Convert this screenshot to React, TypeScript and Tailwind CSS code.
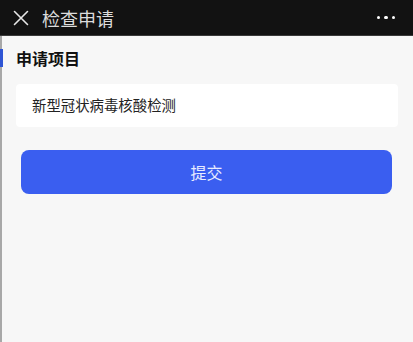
export default function App() {
  return (
    <div
      className="flex h-[342px] w-[413px] flex-col overflow-hidden bg-[#f7f7f7]"
      style={{ fontFamily: '"Noto Sans CJK SC", "Noto Sans", sans-serif' }}
    >
      {/* Top bar */}
      <header className="flex h-[35px] shrink-0 items-center bg-[#121212] pl-[13px] pr-[18px]">
        <svg width="16" height="16" viewBox="0 0 16 16" className="text-[#e6e6e6]">
          <path d="M1.5 1.5 L14.5 14.5 M14.5 1.5 L1.5 14.5" stroke="currentColor" strokeWidth="1.6" strokeLinecap="round" />
        </svg>
        <h1 className="ml-[13px] text-[18px] leading-none text-[#dcdcdc]">检查申请</h1>
        <div className="ml-auto flex gap-[4px]">
          <span className="h-[3.5px] w-[3.5px] rounded-full bg-white" />
          <span className="h-[3.5px] w-[3.5px] rounded-full bg-white" />
          <span className="h-[3.5px] w-[3.5px] rounded-full bg-white" />
        </div>
      </header>
      <div className="h-px shrink-0 bg-[#3a3a3a]" />

      <main className="flex flex-1 flex-col border-l-2 border-[#a8a8a8]">
        {/* Section title */}
        <div className="relative mt-[13px] flex h-[18px] items-center pl-[14px]">
          <span className="absolute -left-[2px] top-0 h-[18px] w-[3px] bg-[#2f55d4]" />
          <h2 className="text-[16px] font-bold leading-none text-[#111]">申请项目</h2>
        </div>

        {/* Item card */}
        <div className="ml-[14px] mr-[15px] mt-[17px] flex h-[43px] items-center rounded-[4px] bg-white pl-[16px]">
          <span className="text-[14.4px] leading-none text-[#222]">新型冠状病毒核酸检测</span>
        </div>

        {/* Submit */}
        <button className="ml-[19px] mr-[21px] mt-[23px] flex h-[44px] items-center justify-center rounded-[8px] bg-[#3a5ef0] text-[16px] text-[#e8ecff]">
          提交
        </button>
      </main>
    </div>
  );
}
